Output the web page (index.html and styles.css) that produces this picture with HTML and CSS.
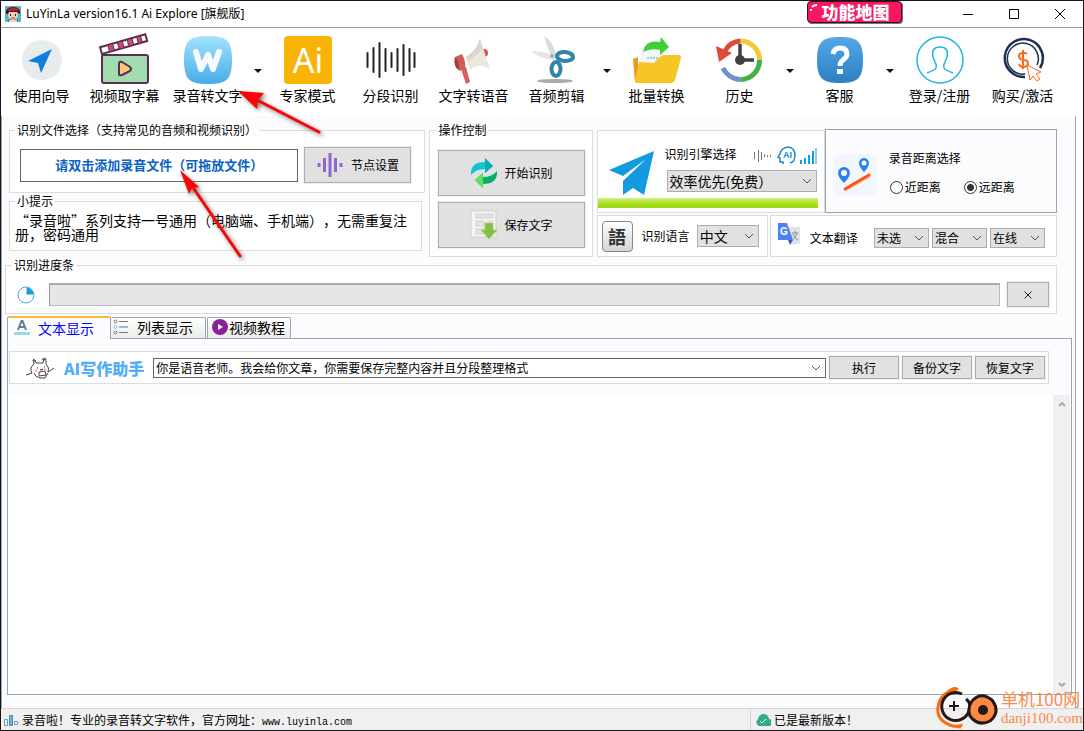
FILE: index.html
```html
<!DOCTYPE html>
<html lang="zh-CN">
<head>
<meta charset="utf-8">
<title>LuYinLa version16.1 Ai Explore [旗舰版]</title>
<link rel="stylesheet" href="styles.css">
</head>
<body>
<div class="window">
  <header class="titlebar">
    <svg class="app-icon" viewBox="0 0 16 16"><rect width="16" height="16" rx="1" fill="#4fb6c8"/><path d="M3 16v-2q5-3 10 0v2z" fill="#3a6ea0"/><circle cx="8" cy="9" r="5" fill="#f6cdb0"/><path d="M1 8Q0 1 8 1t7 7l-2-1-1-1H4L3 8z" fill="#4a1420"/><path d="M3 3q5-3 10 0v2H3z" fill="#b3262c"/><path d="M5.500 8v2M10.500 8v2" stroke="#222"/><path d="M6 12h4" stroke="#c33"/><path d="M4 14h8v2H4z" fill="#e9d8c8"/></svg>
    <h1 class="title">LuYinLa version16.1 Ai Explore [旗舰版]</h1>
    <button class="map-badge" type="button"><svg class="badge-shine" viewBox="0 0 8 8"><path d="M1 7V5M2 3q2-2 5-2" stroke="#fff" stroke-width="2" fill="none"/></svg>功能地图</button>
    <div class="window-controls">
      <button type="button" aria-label="最小化"><svg viewBox="0 0 12 12"><path d="M1 6.500h10" /></svg></button>
      <button type="button" aria-label="最大化"><svg viewBox="0 0 12 12"><path d="M1.500 1.500h9v9h-9z"/></svg></button>
      <button type="button" aria-label="关闭"><svg viewBox="0 0 12 12"><path d="M1 1l10 10M11 1L1 11"/></svg></button>
    </div>
  </header>

  <nav class="toolbar">
    <button class="tool" type="button">
      <svg viewBox="0 0 48 48"><circle cx="24" cy="24" r="20" fill="#e6ecec"/><path d="M34 13L10 25l10 2 3 10z" fill="#0e7fe1"/></svg>使用向导</button>
    <button class="tool" type="button">
      <svg viewBox="0 0 48 48"><rect x="1" y="19" width="46" height="28" rx="2" fill="#a0dcae" stroke="#5c2d50" stroke-width="2"/><g transform="rotate(-16 1 18)"><rect x="1" y="11" width="47" height="7" fill="#fff" stroke="#5c2d50" stroke-width="2"/><path d="M9 11h5v7H9zM19 11h5v7h-5zM29 11h5v7h-5zM39 11h4v7h-4z" fill="#d8456c" stroke="#5c2d50"/></g><path d="M18 27q1-2 3-1l8 5q2 2 0 4l-8 4q-3 1-3-1z" fill="#ffc477" stroke="#5c2d50" stroke-width="2"/></svg>视频取字幕</button>
    <button class="tool" type="button">
      <svg viewBox="0 0 48 48"><defs><linearGradient id="w" x2="0" y2="1"><stop stop-color="#a2e4fa"/><stop offset="1" stop-color="#49ace6"/></linearGradient></defs><path d="M24 0C43 0 48 5 48 24S43 48 24 48 0 43 0 24 5 0 24 0z" fill="url(#w)"/><path d="M12 16l5 17 7-14 5 14 6-17" fill="none" stroke="#f7fbff" stroke-width="6" stroke-linecap="round" stroke-linejoin="round"/></svg>录音转文字</button>
    <button class="drop" type="button" aria-label="录音转文字菜单"></button>
    <button class="tool" type="button">
      <svg viewBox="0 0 48 48"><rect width="48" height="48" rx="4" fill="#f8b305"/><text class="ai-mark" x="24" y="37" text-anchor="middle">Ai</text></svg>专家模式</button>
    <button class="tool" type="button">
      <svg viewBox="0 0 48 48"><path d="M.5 17v14M6.500 12v24M12.500 7v34M18.500 13v22M24.500 17v14M30.500 13v22M36.500 9v30M42.500 13v22M47.500 17v14" stroke="#222" stroke-width="2" stroke-linecap="round"/></svg>分段识别</button>
    <button class="tool" type="button">
      <svg viewBox="0 0 48 48"><circle cx="34" cy="17" r="4" fill="#d5564d"/><path d="M16 21Q26 15 30 3L40 33Q29 26 20 34z" fill="#eae8df"/><path d="M16 21Q26 15 30 3l3 10-15 13z" fill="#dad8ce"/><path d="M5 21l7-3q4 7 3 14l-5 3q-7-4-5-14z" fill="#d15d54"/><path d="M11 33l5-2 4 15-4 2z" fill="#d9605a"/><path d="M5 21q5 5 4 13-6-3-4-13z" fill="#9c423d"/></svg>文字转语音</button>
    <button class="tool" type="button">
      <svg viewBox="0 0 48 48"><ellipse cx="22" cy="45" rx="18" ry="2" fill="#aaa"/><path d="M11 0q10 6 12 20l-3 3Q15 14 11 0z" fill="#d9dcdd"/><path d="M-2 15q13 0 25 5l-2 4Q5 22-2 15z" fill="#e3e5e6"/><ellipse cx="32" cy="20.500" rx="8" ry="4.500" fill="none" stroke="#3285a9" stroke-width="4" transform="rotate(4 32 20)"/><ellipse cx="23" cy="33" rx="4.500" ry="7" fill="none" stroke="#3285a9" stroke-width="4"/><circle cx="19" cy="20" r="2" fill="#aaa"/></svg>音频剪辑</button>
    <button class="drop" type="button" aria-label="音频剪辑菜单"></button>
    <button class="tool" type="button">
      <svg viewBox="0 0 48 48"><path d="M0 23l5-2v25H2z" fill="#e99a20"/><path d="M10 10l22 2v20H6z" fill="#f3f5f7"/><path d="M14 22h11v8H14M9 27h3" fill="none" stroke="#5a9bc0" stroke-dasharray="2 1"/><path d="M2 44l4-18 15 1q6-8 11-8h14q2 0 2 3l-6 22q-1 3-4 3H4q-2 0-2-3z" fill="#f5c625"/><path d="M10 16Q12 3 27 6l1-5 8 10-9 8v-5q-10-2-17 2z" fill="#42cf36"/></svg>批量转换</button>
    <button class="tool" type="button">
      <svg viewBox="0 0 48 48"><g fill="none" stroke-width="5"><path d="M24.500 5A19 19 0 0 1 43.500 24" stroke="#f6c834"/><path d="M43.500 24A19 19 0 0 1 24.500 43.500" stroke="#43b04c"/><path d="M24.500 43.500A20 20 0 0 1 7 32" stroke="#6e91ca"/><path d="M24.500 5A19 19 0 0 0 9 15" stroke="#dd4c38"/></g><path d="M0 10l16 7-13 9z" fill="#dd4c38"/><path d="M24 8v16h14" fill="none" stroke="#414145" stroke-width="3.500"/><circle cx="24" cy="24" r="5" fill="#414145"/></svg>历史</button>
    <button class="drop" type="button" aria-label="历史菜单"></button>
    <button class="tool" type="button">
      <svg viewBox="0 0 48 48"><defs><linearGradient id="q" x2="0" y2="1"><stop stop-color="#53a8e9"/><stop offset="1" stop-color="#2d7fc1"/></linearGradient></defs><path d="M24 1C42 1 47 6 47 24S42 47 24 47 1 42 1 24 6 1 24 1z" fill="url(#q)"/><path d="M17 18q1-6 7-6 7 0 7 6 0 3-4 6-3 2-3 6" fill="none" stroke="#fff" stroke-width="5"/><path d="M21 33h6v5h-6z" fill="#fff"/></svg>客服</button>
    <button class="drop" type="button" aria-label="客服菜单"></button>
    <button class="tool" type="button">
      <svg viewBox="0 0 48 48"><g fill="none" stroke="#20b4e9" stroke-width="1.500"><circle cx="24" cy="24" r="23"/><path d="M11 37q8-3 9-5 1-3-1-6l-2-5q-2-10 7-10t7 10l-2 5q-2 3-1 6 1 2 9 5"/></g></svg>登录/注册</button>
    <button class="tool" type="button">
      <svg viewBox="0 0 48 48"><g fill="none" stroke="#1b2f50"><path d="M41 32A19 19 0 1 0 26 41" stroke-width="2.500"/><path d="M38 29A15.500 15.500 0 1 0 26 38" stroke-width="1.500"/></g><path d="M28 18q-2-2-5-1-4 1-3 4t5 3 4 4q-1 3-5 3-3 0-4-3M24 14v19" fill="none" stroke="#f96a18" stroke-width="2"/><path d="M28 29l14 7-5 2 4 5-3 2-4-5-3 4z" fill="#fff" stroke="#f96a18"/></svg>购买/激活</button>
  </nav>

  <main class="workspace">
    <div class="controls">
      <div class="source-col">
        <fieldset class="group file-group"><legend>识别文件选择（支持常见的音频和视频识别）</legend>
          <div class="file-row">
            <button class="add-file" type="button">请双击添加录音文件（可拖放文件）</button>
            <button class="btn node-btn" type="button"><svg viewBox="0 0 26 28"><path d="M2 12v4M7.500 7v14M13 2v24M18.500 7v14M24 12v4" stroke="#9068cc" stroke-width="3"/></svg>节点设置</button>
          </div>
        </fieldset>
        <fieldset class="group tip-group"><legend>小提示</legend>
          <p>“录音啦”系列支持一号通用（电脑端、手机端），无需重复注册，密码通用</p>
        </fieldset>
      </div>

      <fieldset class="group action-group"><legend>操作控制</legend>
        <div class="action-list">
          <button class="btn action" type="button"><svg viewBox="0 0 28 30"><path d="M1 17Q0 4 15 4V0l8 8-8 7v-4Q6 11 1 17z" fill="#13c5d1"/><path d="M27 13Q28 26 13 26v4l-8-8 8-7v4q9 0 14-6z" fill="#09ad64"/><path d="M15 0l8 8-8 7z" fill="#08adb9"/><path d="M13 15v15l-8-8z" fill="#55e45b"/></svg>开始识别</button>
          <button class="btn action" type="button"><svg viewBox="0 0 28 30"><rect x="1" y="1" width="25" height="26" fill="#f5f5f3" stroke="#cfcfcb"/><path d="M6 4h17v4H6zM6 11h8v5H6zM6 19h8v5H6zM17 11h7" fill="#e2e4e0" stroke="#d0d3ce"/><path d="M15 13h8v7h4l-8 9-8-9h4z" fill="#82bf43" stroke="#a8cc81"/></svg>保存文字</button>
        </div>
      </fieldset>

      <div class="options-col">
        <div class="option-row top-row">
          <section class="panel engine">
            <div class="engine-body">
              <svg class="plane" viewBox="0 0 46 46"><path d="M45 1L0 20l14 6 23-17-23 22v14l10-7 11 7z" fill="#139bdf"/></svg>
              <div class="engine-fields">
                <div class="engine-head"><label for="engine">识别引擎选择</label>
                  <svg class="engine-icons" viewBox="0 0 64 20"><path d="M1.500 6v7M5.500 4v12M8.500 6v8M11.500 8v3M14.500 9v2M17.500 9v2" stroke="#777"/><path d="M30 18v-2h-3v-4l-2-1 2-3q1-6 8-7 7 1 7 8t-5 8" fill="none" stroke="#138bdc" stroke-width="1.500"/><text class="mini-ai" x="30" y="12">AI</text><path d="M48 14v4M52 12v6M56 9v9M60 5v13" stroke="#159be5" stroke-width="2"/><path d="M63 2v16" stroke="#159be5"/></svg>
                </div>
                <select id="engine" class="select engine-select"><option>效率优先(免费）</option></select>
              </div>
            </div>
            <div class="quality"></div>
          </section>
          <section class="panel distance">
            <svg class="route" viewBox="0 0 44 42"><rect width="44" height="42" rx="6" fill="#f1f6ff"/><path d="M12 36l25-14" stroke="#ffc5ac" stroke-width="3"/><path d="M12 35l24-14" stroke="#fc5311" stroke-width="3" stroke-linecap="round"/><path d="M11 13a6 6 0 0 1 6 6q0 4-6 10-6-6-6-10a6 6 0 0 1 6-6zM31 4a5 5 0 0 1 5 5q0 4-5 9-5-5-5-9a5 5 0 0 1 5-5z" fill="#2e80f2"/><circle cx="11" cy="19" r="3" fill="#fff"/><circle cx="31" cy="9" r="2.500" fill="#fff"/></svg>
            <div class="distance-fields" role="radiogroup" aria-labelledby="dist">
              <div id="dist">录音距离选择</div>
              <div class="radios"><label><input type="radio" name="dist">近距离</label><label><input type="radio" name="dist" checked>远距离</label></div>
            </div>
          </section>
        </div>
        <div class="option-row low-row">
          <section class="panel language">
            <span class="lang-icon" aria-hidden="true">語</span>
            <label for="lang">识别语言</label>
            <select id="lang" class="select lang-select"><option>中文</option></select>
          </section>
          <section class="panel translate">
            <svg class="g-icon" viewBox="0 0 22 22"><path d="M8 4h14v17H13z" fill="#dfe2e6"/><path d="M12 22l-2-5h5z" fill="#3257c5"/><path d="M0 0h9l6 17H0z" fill="#4b84f0"/><text class="g-mark" x="2" y="12">G</text><path d="M14 10h6M17 8v2M19 10q-1 5-5 7M15 11q1 4 5 6" stroke="#8b949c" fill="none"/></svg>
            <label for="tr1">文本翻译</label>
            <div class="translate-selects">
              <select id="tr1" class="select"><option>未选</option></select>
              <select class="select" aria-label="翻译模式"><option>混合</option></select>
              <select class="select" aria-label="翻译方式"><option>在线</option></select>
            </div>
          </section>
        </div>
      </div>
    </div>

    <fieldset class="group progress-group"><legend>识别进度条</legend>
      <div class="progress-row">
        <svg class="pie" viewBox="0 0 18 18"><circle cx="9" cy="9" r="8" fill="#fff" stroke="#42ade0"/><path d="M9.500 1.500a7.500 7.500 0 0 1 7 7h-7z" fill="#149bdc"/></svg>
        <div class="progress" role="progressbar" aria-label="识别进度条" aria-valuenow="0"></div>
        <button class="btn cancel" type="button" aria-label="取消"><svg viewBox="0 0 8 8"><path d="M.5.5l7 7M7.500.5l-7 7" stroke="#222"/></svg></button>
      </div>
    </fieldset>

    <div class="tabs" role="tablist">
      <button class="tab active" role="tab" aria-selected="true" type="button"><svg viewBox="0 0 16 16"><path d="M4 10L7.500 1h1L12 10M5.500 7h5" fill="none" stroke="#657e8b" stroke-width="2"/><path d="M0 12h16v3H0z" fill="#93dbe9"/></svg>文本显示</button>
      <button class="tab list-tab" role="tab" aria-selected="false" type="button"><svg viewBox="0 0 16 16"><g fill="none" stroke="#777"><circle cx="2.500" cy="2.500" r="1.500"/><circle cx="2.500" cy="13.500" r="1.500"/><path d="M6 2.500h9M6 13.500h9"/></g><g fill="none" stroke="#8cc3e4"><circle cx="2.500" cy="8" r="1.500"/><path d="M6 8h9" stroke-width="2"/></g></svg>列表显示</button>
      <button class="tab video-tab" role="tab" aria-selected="false" type="button"><svg viewBox="0 0 16 16"><circle cx="8" cy="8" r="8" fill="#8b1f98"/><path d="M6 5l5 3-5 3z" fill="#fff"/></svg>视频教程</button>
    </div>
    <section class="tab-page" role="tabpanel">
      <div class="writer">
        <svg class="cat" viewBox="0 0 28 22"><g fill="none" stroke="#444" stroke-width="1"><path d="M0 18l6-2q-3-5 2-9L7 3l2 1 1 2h7l1-5 2 1v5q4 4 2 8l6-4M8 16q1 4 6 5h5l3-5M7 2l3 2M16 2l3 1"/><path d="M13 15l6-1 1 4-7 1z"/></g><path d="M11 11h1M18 10h1M14 13l3-1" stroke="#222"/><path d="M9 13l2 1M18 12l2 1" stroke="#f7a5a0" stroke-width="2"/></svg>
        <label class="writer-title" for="prompt">AI写作助手</label>
        <select id="prompt" class="select prompt"><option>你是语音老师。我会给你文章，你需要保存完整内容并且分段整理格式</option></select>
        <button class="btn writer-btn" type="button">执行</button>
        <button class="btn writer-btn" type="button">备份文字</button>
        <button class="btn writer-btn" type="button">恢复文字</button>
      </div>
      <div class="editor">
        <textarea aria-label="文本显示"></textarea>
        <div class="scrollbar" aria-hidden="true"><svg viewBox="0 0 8 5"><path d="M1 4l3-3 3 3"/></svg><svg viewBox="0 0 8 5"><path d="M1 1l3 3 3-3"/></svg></div>
      </div>
    </section>
  </main>

  <footer class="statusbar">
    <div class="status-main"><svg viewBox="0 0 16 12"><path d="M1.500 5.500h3v6h-3zM11.500 7.500h3v3h-3z" fill="#eef8fd" stroke="#7895ad"/><path d="M6.500 1.500h3v10h-3z" fill="#63bbdf" stroke="#4a89b0"/></svg><span>录音啦！专业的录音转文字软件，官方网址：<span class="site">www.luyinla.com</span></span></div>
    <div class="status-version"><svg viewBox="0 0 16 12"><path d="M4 12a4 4 0 0 1-1-7q1-5 6-5 4 0 5 5a3.500 3.500 0 0 1-1 7z" fill="#34a98e"/><path d="M5 7l2 2 4-4" fill="none" stroke="#fff"/></svg>已是最新版本！</div>
  </footer>

  <svg class="pointer pointer-a" viewBox="0 0 90 50" aria-hidden="true"><path d="M20 10L82 42" stroke="#fa0505" stroke-width="3" stroke-linecap="round"/><path d="M1 1l26 2-6 7-1 9z" fill="#fa0505"/></svg>
  <svg class="pointer pointer-b" viewBox="0 0 70 95" aria-hidden="true"><path d="M15 20l46 67" stroke="#fa0505" stroke-width="3" stroke-linecap="round"/><path d="M1 1l19 17-7 1-3 6z" fill="#fa0505"/></svg>
  <div class="watermark" aria-hidden="true">
    <svg viewBox="0 0 64 44"><path d="M20 3Q4 7 2 21t15 19l8 1" fill="none" stroke="#fb6e0c" stroke-width="3"/><path d="M11 5q8-7 12-2l-4 3zM18 39l9-1q-1 5-7 4z" fill="#fb6e0c"/><path d="M26 8A14 14 0 1 0 33 25Q36 17 30 13" fill="none" stroke="#231815" stroke-width="3"/><circle cx="47" cy="24" r="14" fill="#fd8942"/><path d="M36 15q9-10 20-1 9 12-2 21-12 6-20-5-3-8 2-15" fill="none" stroke="#231815" stroke-width="3"/><circle cx="47" cy="24" r="5" fill="#231815"/><path d="M13 20h10M18 15v10" stroke="#231815" stroke-width="2"/></svg>
    <div class="wm-text"><span>单机100网</span><span class="wm-url">danji100.com</span></div>
  </div>
</div>
</body>
</html>
```
FILE: styles.css
```css
* { box-sizing: border-box; }
body {
  margin: 0;
  font: 12px/16px "Noto Sans CJK SC", sans-serif;
  text-spacing-trim: space-all;
  color: #000;
}
button, select, textarea { font: inherit; color: inherit; }
button { padding: 0; border: 0; background: none; }
svg { display: block; flex: none; }
p, h1 { margin: 0; }

.window {
  position: relative;
  display: flex;
  flex-direction: column;
  min-height: 100vh;
  border: 1px solid #15151a;
  background: #fff;
  overflow: hidden;
}

/* Title bar */
.titlebar {
  display: flex;
  align-items: center;
  height: 27px;
  padding-left: 4px;
  border-bottom: 1px solid #999;
}
.app-icon { width: 16px; height: 16px; }
.title { margin-left: 5px; font: 12px/16px "Noto Sans", "Noto Sans CJK SC", sans-serif; }
.map-badge {
  position: relative;
  height: 22px;
  width: 95px;
  margin-left: auto;
  padding-left: 2px;
  border: 1px solid #3a1020;
  border-radius: 4px;
  background: #fb1760;
  box-shadow: 1px 1px 0 #777;
  color: #fff;
  font-size: 17px;
  font-weight: 900;
  line-height: 20px;
  align-self: flex-start;
}
.badge-shine { position: absolute; left: 2px; top: 2px; width: 8px; height: 8px; }
.window-controls { display: flex; margin-left: 43px; }
.window-controls button { width: 46px; height: 26px; display: grid; place-items: center; }
.window-controls svg { width: 12px; height: 12px; fill: none; stroke: #000; }

/* Toolbar */
.toolbar { display: flex; margin-left: -1px; padding: 8px 0 11px; }
.tool {
  width: 83px;
  display: flex;
  flex-direction: column;
  align-items: center;
  gap: 1px;
  font-size: 14px;
  line-height: 20px;
  white-space: nowrap;
}
.tool svg { width: 48px; height: 48px; overflow: visible; }
.ai-mark { font: 34px "Noto Sans", sans-serif; fill: #fff; }
.drop { width: 17px; display: flex; justify-content: center; }
.drop::before {
  content: "";
  margin-top: 33px;
  align-self: flex-start;
  border: 4px solid transparent;
  border-top-color: #111;
  border-bottom: 0;
}

/* Workspace */
.workspace {
  flex: 1;
  display: flex;
  flex-direction: column;
  margin-right: 7px;
  padding: 6px 3px 13px;
  border: solid #93a6b2;
  border-width: 0 1px;
  background: #fcfcff;
}
.group, .panel { margin: 0; min-width: 0; border: 1px solid #dcdcdc; background: #fff; }
.group { padding: 0 8px; }
.group > legend { margin-left: -2px; padding: 0 2px; line-height: 16px; }
.controls {
  display: grid;
  grid-template-columns: 416fr 163fr 460fr;
  gap: 4px;
  margin: 0 15px 0 4px;
}
.btn {
  display: flex;
  align-items: center;
  justify-content: center;
  border: 1px solid #adadad;
  background: #e1e1e1;
  outline: 1px solid #f1f1f1;
}
.file-group { padding: 9px 13px 9px 10px; }
.file-group > legend { margin-left: -5px; }
.file-row { display: flex; align-items: center; gap: 6px; }
.add-file {
  flex: 1;
  height: 33px;
  border: 1px solid #646464;
  background: #fff;
  color: #0a62c4;
  font-size: 13px;
  font-weight: 700;
}
.node-btn { width: 107px; height: 36px; gap: 8px; }
.node-btn svg { width: 26px; height: 28px; }
.tip-group { margin-right: 3px; padding: 4px 4px 9px 5px; }
.tip-group > legend { margin-left: 0; }
.tip-group p { font-size: 14px; line-height: 14px; }
.action-group { padding: 12px 7px 8px 8px; }
.action-list { display: grid; gap: 6px; }
.action { height: 46px; gap: 6px; }
.action svg { width: 28px; height: 30px; }

.options-col { display: flex; flex-direction: column; gap: 2px; padding-top: 7px; }
.option-row { display: grid; flex: 1; }
.top-row { flex: none; grid-template-columns: 228fr 232fr; height: 84px; }
.low-row { grid-template-columns: 171fr 287fr; gap: 2px; }
.engine { margin-top: 1px; padding-bottom: 4px; display: flex; flex-direction: column; }
.engine-body { flex: 1; display: flex; gap: 12px; padding: 15px 7px 0 11px; }
.plane { width: 46px; height: 46px; margin-top: 4px; }
.engine-fields { flex: 1; min-width: 0; display: flex; flex-direction: column; gap: 6px; }
.engine-head { display: flex; justify-content: space-between; height: 18px; }
.engine-head label { margin-left: -2px; }
.engine-icons { width: 64px; height: 20px; }
.mini-ai { font: bold 9px "Liberation Sans", sans-serif; fill: #138bdc; }
.quality { height: 10px; margin: 0 6px 0 0; background: linear-gradient(#d5f27a, #a7de1e 60%, #9bd90b); }
.select {
  appearance: none;
  min-width: 0;
  border: 1px solid #adadad;
  border-radius: 0;
  padding: 0 2px;
  height: 20px;
  background: #e1e1e1 url("data:image/svg+xml,%3Csvg xmlns='http://www.w3.org/2000/svg' width='10' height='6'%3E%3Cpath d='M1 1l4 4 4-4' fill='none' stroke='%23555'/%3E%3C/svg%3E") no-repeat right 4px center;
}
.engine-select { height: 22px; width: 100%; font-size: 14px; }
.distance { display: flex; align-items: center; gap: 12px; padding: 7px 7px 0; border-color: #93a6b2; background: #fcfcff; }
.route { width: 44px; height: 42px; }
.distance-fields { display: grid; gap: 13px; padding-bottom: 4px; }
.radios { display: flex; gap: 22px; }
.radios label { display: flex; align-items: center; gap: 2px; }
.radios input {
  appearance: none;
  width: 13px;
  height: 13px;
  margin: 0 0 0 1px;
  border: 1px solid #333;
  border-radius: 50%;
  background: #fff;
}
.radios input:checked { background: radial-gradient(circle, #333 3px, #fff 4px); }
.language, .translate { display: flex; align-items: center; }
.language { padding: 0 8px 0 4px; }
.lang-icon {
  width: 31px;
  height: 31px;
  border: 1px solid #888;
  border-radius: 4px;
  background: linear-gradient(#fff, #d4d4d4);
  font-size: 18px;
  font-weight: 700;
  line-height: 28px;
  text-align: center;
  color: #333;
}
.language label { margin-left: 9px; }
.lang-select { width: 62px; height: 22px; margin-left: auto; font-size: 14px; }
.translate { padding: 4px 11px 0 7px; }
.g-icon { width: 22px; height: 22px; margin-bottom: 8px; }
.g-mark { font: bold 10px "Liberation Sans", sans-serif; fill: #fff; }
.translate label { margin-left: 10px; }
.translate-selects { display: flex; gap: 3px; margin-left: auto; }
.translate .select { width: 55px; }

.progress-group { margin: 0 15px 0 0; padding: 9px 7px 6px 11px; }
.progress-group > legend { margin-left: -5px; }
.progress-row { display: flex; align-items: center; }
.pie { width: 18px; height: 18px; margin-right: 14px; }
.progress { flex: 1; height: 23px; border: 1px solid #bbb; border-top: 2px solid #aaa; border-left-color: #999; background: #e6e6e6; }
.cancel { width: 42px; height: 25px; margin-left: 7px; }
.cancel svg { width: 8px; height: 8px; }

/* Tabs */
.tabs { display: flex; align-items: flex-end; height: 22px; margin: 2px 0 0 2px; }
.tab {
  display: flex;
  align-items: center;
  height: 21px;
  padding: 0 10px 2px 2px;
  border: 1px solid #93a6b2;
  border-bottom: 0;
  border-radius: 2px 2px 0 0;
  background: linear-gradient(#fff, #ececea);
  font-size: 14px;
}
.tab svg { width: 16px; height: 16px; margin-right: 8px; }
.tab.active {
  position: relative;
  width: 104px;
  height: 23px;
  margin-bottom: -1px;
  padding-left: 6px;
  border-top: 2px solid #fcb63b;
  background: #fcfcff;
  color: #00f;
}
.list-tab { width: 95px; border-left: 0; }
.list-tab svg { margin-right: 8px; }
.video-tab { width: 84px; margin-left: 1px; padding: 0 4px 2px; }
.video-tab svg { margin-right: 1px; }
.tab-page {
  flex: 1;
  display: flex;
  flex-direction: column;
  margin-left: 2px;
  padding: 12px 1px 0;
  border: 1px solid #93a6b2;
  background: #fcfcff;
}
.writer {
  display: flex;
  align-items: center;
  gap: 3px;
  height: 33px;
  margin: 0 21px 11px 0;
  padding: 0 3px 0 16px;
  border: 1px solid #dcdcdc;
  background: #fff;
}
.cat { width: 28px; height: 22px; }
.writer-title { margin: 0 6px 0 7px; color: #55aef5; font-size: 16px; font-weight: 900; line-height: 24px; }
.prompt { flex: 1; border-color: #666; background-color: #fff; }
.writer-btn { width: 70px; height: 23px; }
.editor { flex: 1; display: flex; background: #fff; }
.editor textarea { flex: 1; padding: 2px; border: 0; outline: 0; resize: none; background: #fff; font-size: 14px; }
.scrollbar { width: 17px; display: flex; flex-direction: column; justify-content: space-between; align-items: center; padding: 7px 0; background: #f0f0f0; }
.scrollbar svg { width: 8px; height: 5px; fill: none; stroke: #aaa; stroke-width: 2; }

/* Status bar */
.statusbar { display: grid; grid-template-columns: 749fr 333fr; height: 22px; border-top: 1px solid #d5d5d5; background: #f0f0f0; }
.status-main, .status-version { display: flex; align-items: center; gap: 3px; padding: 1px 2px 0; }
.status-version { padding-left: 4px; border-left: 1px solid #d5d5d5; }
.statusbar svg { width: 16px; height: 12px; }
.site { font: 10px "Liberation Mono", monospace; }

/* Annotations over the window */
.pointer { position: absolute; pointer-events: none; filter: drop-shadow(2px 2px 2px #777); }
.pointer-a { left: 236px; top: 89px; width: 90px; height: 50px; }
.pointer-b { left: 178px; top: 168px; width: 70px; height: 95px; }
.watermark { position: absolute; right: 0; bottom: 0; display: flex; align-items: center; gap: 1px; color: #f98b4b; }
.watermark svg { width: 64px; height: 44px; }
.wm-text { display: grid; font-size: 17px; line-height: 20px; }
.wm-url { font: 15px/18px "Liberation Serif", serif; }
```
